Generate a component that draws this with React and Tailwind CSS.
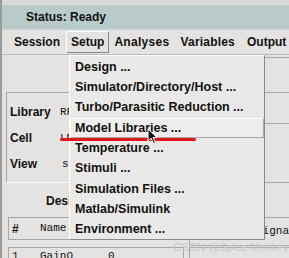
import React from 'react';

const menuItems = [
  'Design ...',
  'Simulator/Directory/Host ...',
  'Turbo/Parasitic Reduction ...',
  'Model Libraries ...',
  'Temperature ...',
  'Stimuli ...',
  'Simulation Files ...',
  'Matlab/Simulink',
  'Environment ...',
];

const SetupMenu = () => (
  <div className="absolute left-[67px] top-[55px] w-[196px] h-[185px] bg-[#ebe9e7] border border-t-white border-l-white border-r-[#8a8886] border-b-[#8a8886] pt-[1px] text-[12.5px]">
    {menuItems.map((item, i) => (
      <div
        key={item}
        className={
          i === 3
            ? 'h-[20.3px] flex items-center pl-[4px] bg-[#efedeb] border border-t-white border-l-white border-r-[#a9a7a5] border-b-[#a9a7a5]'
            : 'h-[20.3px] flex items-center pl-[5px]'
        }
      >
        {item}
      </div>
    ))}
  </div>
);

const Cursor = () => (
  <svg className="absolute left-[145px] top-[128px]" width="11" height="17" viewBox="0 0 11 17">
    <path d="M1 1 L1 13 L4 10 L6.5 15.5 L8.5 14.5 L6 9.5 L10 9.5 Z" fill="#111" stroke="#fff" strokeWidth="1" />
  </svg>
);

export default function App() {
  return (
    <div className="relative w-[289px] h-[258px] overflow-hidden whitespace-nowrap bg-[#e5e3e1] font-['Liberation_Sans',sans-serif] text-[12px] font-bold text-[#111] border-l-[2px] border-[#9a9a98]">
      <div className="h-[5px] bg-[#d9d9d7]" />
      <div className="h-[25px] bg-[#b8cbca] flex items-center pl-[24px] border-b border-[#c9d6d5]">
        Status: Ready
      </div>
      <div className="h-[25px] flex items-center pl-[12px] border-b border-[#bdbbb9]">
        <span>Session</span>
        <span className="ml-[6px] h-[22px] px-[4px] flex items-center border border-t-white border-l-white border-r-[#8a8886] border-b-[#8a8886]">Setup</span>
        <span className="ml-[5px] tracking-[0.3px]">Analyses</span>
        <span className="ml-[11px] tracking-[0.2px]">Variables</span>
        <span className="ml-[12px]">Output</span>
      </div>

      <div className="flex h-[128px]">
        <div className="w-[185px] pt-[37px] pl-[4px]">
          <div className="h-[91px] border border-t-[#a9a7a5] border-l-[#a9a7a5] border-r-white border-b-white pl-[3px] pt-[10px] flex flex-col gap-[8px]">
            <div className="flex items-center h-[18px]">
              <span className="w-[50px]">Library</span>
              <span className="font-normal font-['Liberation_Mono',monospace] text-[11px]">RFlib</span>
            </div>
            <div className="flex items-center h-[18px]">
              <span className="w-[50px]">Cell</span>
              <span className="font-normal font-['Liberation_Mono',monospace] text-[11px]">LNA</span>
            </div>
            <div className="flex items-center h-[18px]">
              <span className="w-[52px]">View</span>
              <span className="font-normal font-['Liberation_Mono',monospace] text-[11px]">schematic</span>
            </div>
          </div>
        </div>
        <div className="flex-1 pl-[76px] pt-[2px] flex flex-col">
          <div className="h-[36px] border border-[#a9a7a5] border-r-0" />
          <div className="h-[31px] border border-t-0 border-[#a9a7a5] border-r-0" />
          <div className="h-[59px] border border-t-0 border-[#a9a7a5] border-r-0" />
        </div>
      </div>

      <div className="flex">
        <div className="w-[182px] shrink-0 pl-[6px]">
          <div className="h-[35px] flex items-center pl-[38px]">Design Variables</div>
          <div className="h-[23px] mt-[-1px] border border-[#a9a7a5] flex items-center pl-[3px]">
            <span className="w-[28px]">#</span>
            <span className="font-normal font-['Liberation_Mono',monospace] text-[11px]">Name</span>
          </div>
          <div className="h-[20px] mt-[7px] border border-[#a9a7a5] flex items-start pl-[3px] font-normal font-['Liberation_Mono',monospace] text-[11px]">
            <span className="w-[28px]">1</span>
            <span className="w-[68px]">GainO</span>
            <span>0</span>
          </div>
        </div>
        <div className="flex-1 min-w-0 pl-[5px]">
          <div className="h-[35px]" />
          <div className="h-[29px] mt-[-1px] border border-[#a9a7a5] border-r-0 flex items-center pl-[3px] overflow-hidden font-normal font-['Liberation_Mono',monospace] text-[11px]">
            <span className="w-[30px] shrink-0 font-bold font-['Liberation_Sans',sans-serif] text-[12px]">#</span>
            <span className="shrink-0">Name/Signal/Expr</span>
          </div>
          <div className="h-[20px] mt-[1px] border border-[#a9a7a5] border-r-0" />
        </div>
      </div>

      <SetupMenu />
      <div className="absolute left-[58px] top-[138px] w-[136px] h-[3px] bg-[#e0181c] rounded-full" />
      <Cursor />
      <div className="absolute left-[172px] top-[241px] text-[11px] leading-[12px] font-normal text-[#c9c7c5]">
        CSDN @Spice Monkey！！
      </div>
    </div>
  );
}
